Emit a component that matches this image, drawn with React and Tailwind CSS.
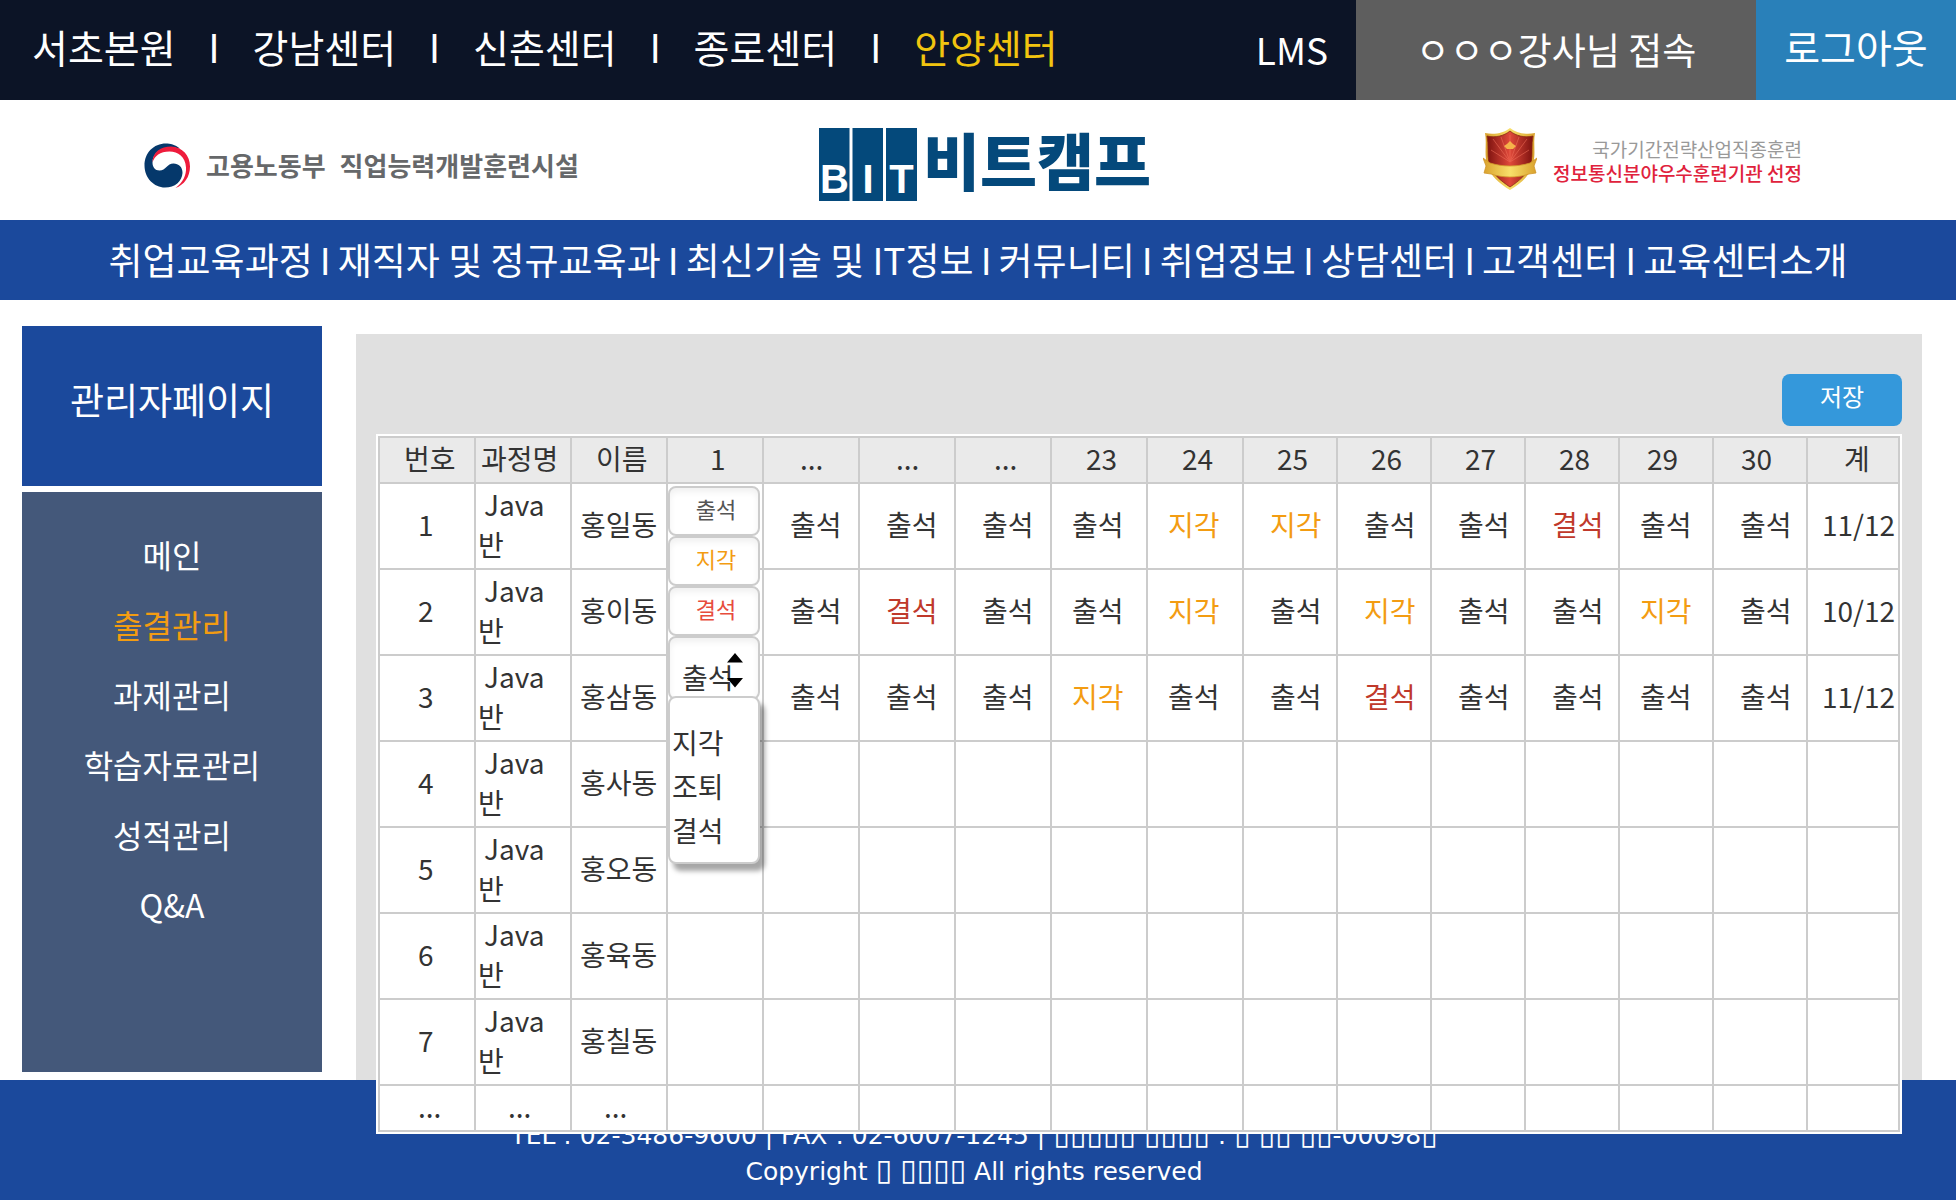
import React from "react";

const centers = ["서초본원", "강남센터", "신촌센터", "종로센터", "안양센터"];

const navItems = [
  "취업교육과정",
  "재직자 및 정규교육과",
  "최신기술 및 IT정보",
  "커뮤니티",
  "취업정보",
  "상담센터",
  "고객센터",
  "교육센터소개",
];

const menu = ["메인", "출결관리", "과제관리", "학습자료관리", "성적관리", "Q&A"];

const columns = [
  { label: "번호", head: "pl-6", cell: "pl-[38px]", width: "w-24" },
  { label: "과정명", head: "pl-[5px]", cell: "pl-[2px]", width: "w-24" },
  { label: "이름", head: "pl-6", cell: "pl-2", width: "w-24" },
  { label: "1", head: "pl-[42px]", cell: "", width: "w-24" },
  { label: "...", head: "pl-9", cell: "pl-[26px]", width: "w-24" },
  { label: "...", head: "pl-9", cell: "pl-[26px]", width: "w-24" },
  { label: "...", head: "pl-[38px]", cell: "pl-[26px]", width: "w-24" },
  { label: "23", head: "pl-[34px]", cell: "pl-5", width: "w-24" },
  { label: "24", head: "pl-[34px]", cell: "pl-5", width: "w-24" },
  { label: "25", head: "pl-[33px]", cell: "pl-[26px]", width: "w-[94px]" },
  { label: "26", head: "pl-[33px]", cell: "pl-[26px]", width: "w-[94px]" },
  { label: "27", head: "pl-[33px]", cell: "pl-[26px]", width: "w-[94px]" },
  { label: "28", head: "pl-[33px]", cell: "pl-[26px]", width: "w-[94px]" },
  { label: "29", head: "pl-[27px]", cell: "pl-5", width: "w-[94px]" },
  { label: "30", head: "pl-[27px]", cell: "pl-[26px]", width: "w-[94px]" },
  { label: "계", head: "pl-9", cell: "pl-[14px]", width: "w-[92px]" },
];

const P = "출석";
const L = "지각";
const A = "결석";

const students = [
  { name: "홍일동", days: [P, P, P, P, L, L, P, P, A, P, P], total: "11/12" },
  { name: "홍이동", days: [P, A, P, P, L, P, L, P, P, L, P], total: "10/12" },
  { name: "홍삼동", days: [P, P, P, L, P, P, A, P, P, P, P], total: "11/12" },
  { name: "홍사동", days: [], total: "" },
  { name: "홍오동", days: [], total: "" },
  { name: "홍육동", days: [], total: "" },
  { name: "홍칠동", days: [], total: "" },
];

const statusColor = {
  [P]: "text-[#333333]",
  [L]: "text-[#f39c12]",
  [A]: "text-[#c0392b]",
};

const cellBase = "border-2 border-[#cccccc] pb-1 pr-0 pt-0 text-left font-normal";

function TopBar() {
  return (
    <header className="flex h-[100px] items-stretch bg-[#0c1426] text-white">
      <nav aria-label="센터" className="flex flex-1 items-center pb-2 pl-8 text-[39px] leading-[58px]">
        {centers.map((c, i) => (
          <React.Fragment key={c}>
            {i > 0 && <span className="w-[77px] text-center">I</span>}
            <a href="#" className={i === 4 ? "text-[#f1c40f]" : ""}>
              {c}
            </a>
          </React.Fragment>
        ))}
      </nav>
      <a href="#" className="flex items-center pr-7 text-[37px]">
        LMS
      </a>
      <div className="flex w-[400px] items-center justify-center bg-[#5e5e5e] text-[37px]">ㅇㅇㅇ강사님 접속</div>
      <button type="button" className="w-[200px] bg-[#2980b9] pb-2 text-[39px] leading-[58px]">
        로그아웃
      </button>
    </header>
  );
}

function GovLogo() {
  return (
    <div className="flex items-center gap-4">
      <svg viewBox="0 0 46 46" className="size-[46px]" aria-hidden="true">
        <path
          d="M36 5.5C31 1.500 26 .5 22 .5C9.500 .5 .5 10 .5 22.500C.5 35 10 44.500 21 44.500C31 44.500 38 38.500 38.500 30C38.700 24 34.500 20.500 29.500 20.500C23 20.500 22 27.500 15.500 27.500C11 27.500 8.500 24 8.500 19.500C8.500 10 17 4.500 26 4.500C30 4.500 33 5 36 5.500Z"
          fill="#05386b"
        />
        <path
          d="M8.500 19.500C8.500 9 17 3.500 27 3.500C38.500 4 46 12.500 46 23.500C46 34 40 42 31.500 45C39 39.500 42.500 32 42 24.500C41.500 14 34 8.500 25.500 8.500C16 8.500 10.500 13 8.500 19.500Z"
          fill="#ee1c3c"
        />
      </svg>
      <p className="flex gap-[14px] pb-[2px] text-[26px] font-bold leading-9 text-[#66686a]">
        <span>고용노동부</span>
        <span>직업능력개발훈련시설</span>
      </p>
    </div>
  );
}

function BitLogo() {
  return (
    <div className="flex items-center gap-[6px] pl-6">
      <svg viewBox="0 0 98 73" className="h-[73px] w-[98px]" role="img" aria-label="BIT">
        <g fill="#04497b">
          <rect x="0" y="0" width="30.500" height="73" />
          <rect x="33.500" y="0" width="30.500" height="73" />
          <rect x="67" y="0" width="31" height="73" />
        </g>
        <g fill="#ffffff" fontFamily="Liberation Sans" fontWeight="700" fontSize="40" textAnchor="middle">
          <text x="15.500" y="65">B</text>
          <text x="49" y="65">I</text>
          <text x="82.500" y="65">T</text>
        </g>
      </svg>
      <span className="pb-[10px] text-[62px] font-black leading-[63px] text-[#04497b]">비트캠프</span>
    </div>
  );
}

function AwardLogo() {
  return (
    <div className="flex items-center gap-4">
      <svg viewBox="0 0 54 62" className="h-[62px] w-[54px]" aria-hidden="true">
        <defs>
          <linearGradient id="shieldRed" x1="0" x2="1">
            <stop offset="0" stopColor="#7d120f" />
            <stop offset=".5" stopColor="#e0493a" />
            <stop offset="1" stopColor="#7d120f" />
          </linearGradient>
          <linearGradient id="shieldGold" x1="0" x2="1">
            <stop offset="0" stopColor="#d9a02c" />
            <stop offset=".5" stopColor="#f8e06a" />
            <stop offset="1" stopColor="#d9a02c" />
          </linearGradient>
        </defs>
        <path d="M27 0C21 5 11 7 2 5C4 15 1 26 4 36C7 48 17 56 27 62C37 56 47 48 50 36C53 26 50 15 52 5C43 7 33 5 27 0Z" fill="url(#shieldGold)" />
        <path d="M27 3C21 8 12 10 4 8C6 17 4 26 6 35C9 46 18 53 27 59C36 53 45 46 48 35C50 26 48 17 50 8C42 10 33 8 27 3Z" fill="url(#shieldRed)" stroke="#8a2a10" strokeWidth=".8" />
        <path d="M27 34L10 11M27 34L18 9M27 34V7M27 34L36 9M27 34L44 11M27 34L8 22M27 34L46 22" stroke="#f0705a" strokeWidth="1" opacity=".55" />
        <path d="M21 18L24 16L27 13L30 16L33 18L30 21H24Z" fill="#f6b24a" />
        <path d="M0 30L7 35C20 39 34 39 47 35L54 30L51 38L53 45L46 46C34 50 20 50 8 46L1 45L3 38Z" fill="url(#shieldGold)" stroke="#d0962a" strokeWidth=".8" />
      </svg>
      <p className="flex flex-col items-end pt-1 text-[19px] leading-6">
        <span className="text-[#999999]">국가기간전략산업직종훈련</span>
        <span className="font-medium text-[#e0223c]">정보통신분야우수훈련기관 선정</span>
      </p>
    </div>
  );
}

function Sidebar() {
  return (
    <aside className="mt-[26px] flex w-[300px] shrink-0 flex-col gap-[6px] text-white">
      <h1 className="flex h-40 items-center justify-center bg-[#1b499c] pb-3 text-[37px]">관리자페이지</h1>
      <nav aria-label="관리자 메뉴" className="h-[580px] bg-[#44587a] pt-[27px]">
        <ul>
          {menu.map((m) => (
            <li key={m} className="text-center text-[32px] leading-[70px]">
              <a href="#" className={m === "출결관리" ? "text-[#f39c12]" : ""}>
                {m}
              </a>
            </li>
          ))}
        </ul>
      </nav>
    </aside>
  );
}

function StatusPicker() {
  const box = "block w-full rounded-lg border-2 border-[#cccccc] bg-white shadow-[inset_0_4px_6px_rgba(0,0,0,0.06)]";
  const quick = [
    { label: P, color: "text-[#555555]" },
    { label: L, color: "text-[#f39c12]" },
    { label: A, color: "text-[#e74c3c]" },
  ];
  return (
    <div className="absolute left-0 top-[2px] z-10 w-[92px]">
      {quick.map((q) => (
        <button key={q.label} type="button" className={`${box} h-[50px] pb-[6px] pl-1 text-[22px] leading-8 ${q.color}`}>
          {q.label}
        </button>
      ))}
      <div className="relative">
        <select aria-label="출결 상태" defaultValue={P} className={`${box} h-16 appearance-none pl-3 pt-[18px] leading-10`}>
          <option>출석</option>
          <option>지각</option>
          <option>조퇴</option>
          <option>결석</option>
        </select>
        <svg viewBox="0 0 16 36" className="pointer-events-none absolute right-[17px] top-[17px] h-9 w-4" aria-hidden="true">
          <path d="M8 0L16 9.500H0ZM8 34.500L16 25H0Z" fill="#000000" />
        </svg>
      </div>
      <ul
        role="listbox"
        aria-label="출결 상태 목록"
        className="relative -mt-1 rounded-lg border-2 border-[#cccccc] bg-white pb-[10px] pl-[2px] pt-[22px] leading-[44px] shadow-[5px_7px_5px_rgba(0,0,0,0.35)]"
      >
        <li role="option" aria-selected="false">지각</li>
        <li role="option" aria-selected="false">조퇴</li>
        <li role="option" aria-selected="false">결석</li>
      </ul>
    </div>
  );
}

function AttendanceTable() {
  return (
    <table className="w-full table-fixed border-collapse bg-white text-[28px] leading-10 text-[#333333]">
      <colgroup>
        {columns.map((c, i) => (
          <col key={i} className={c.width} />
        ))}
      </colgroup>
      <thead>
        <tr className="bg-[#eaeaea]">
          {columns.map((c, i) => (
            <th key={i} scope="col" className={`${cellBase} whitespace-nowrap ${c.head}`}>
              {c.label}
            </th>
          ))}
        </tr>
      </thead>
      <tbody>
        {students.map((s, r) => (
          <tr key={s.name} className="h-[86px]">
            <td className={`${cellBase} ${columns[0].cell}`}>{r + 1}</td>
            <td className={`${cellBase} ${columns[1].cell}`}>
              <span className="block pl-[6px]">Java</span>
              <span className="block">반</span>
            </td>
            <td className={`${cellBase} whitespace-nowrap ${columns[2].cell}`}>{s.name}</td>
            <td className={`${cellBase} relative`}>{r === 0 && <StatusPicker />}</td>
            {columns.slice(4, 15).map((c, i) => (
              <td key={i} className={`${cellBase} whitespace-nowrap ${c.cell} ${statusColor[s.days[i]] || ""}`}>
                {s.days[i]}
              </td>
            ))}
            <td className={`${cellBase} whitespace-nowrap ${columns[15].cell}`}>{s.total}</td>
          </tr>
        ))}
        <tr className="h-[46px]">
          {columns.map((c, i) => (
            <td key={i} className={`${cellBase} ${i === 0 ? "pl-[38px]" : "pl-8"}`}>
              {i < 3 ? "..." : ""}
            </td>
          ))}
        </tr>
      </tbody>
    </table>
  );
}

function Boxes({ children }) {
  return <span className="text-[30px] leading-none">{children}</span>;
}

export default function App() {
  return (
    <div className="min-h-screen bg-white font-['Noto_Sans_CJK_KR',sans-serif]">
      <TopBar />
      <div className="grid h-[120px] grid-cols-3 items-center pl-36 pr-[154px]">
        <div className="flex pt-3">
          <GovLogo />
        </div>
        <div className="flex justify-center pt-2">
          <BitLogo />
        </div>
        <div className="flex justify-end pb-[2px]">
          <AwardLogo />
        </div>
      </div>
      <nav
        aria-label="주 메뉴"
        className="flex h-20 items-center justify-center whitespace-nowrap bg-[#1b499c] pb-[2px] text-[37px] leading-[54px] text-white"
      >
        {navItems.map((n, i) => (
          <React.Fragment key={n}>
            {i > 0 && <span className="w-[25px] text-center">I</span>}
            <a href="#">{n}</a>
          </React.Fragment>
        ))}
      </nav>
      <main className="flex items-start gap-[34px] pl-[22px] pr-[34px]">
        <Sidebar />
        <section aria-label="출결관리" className="mt-[34px] min-w-0 flex-1 bg-[#e0e0e0] px-5 pt-10">
          <div className="flex justify-end pb-2">
            <button type="button" className="h-[52px] w-[120px] rounded-lg bg-[#3498db] pb-2 text-2xl text-white">
              저장
            </button>
          </div>
          <div className="relative z-10 bg-white p-[2px]">
            <AttendanceTable />
          </div>
        </section>
      </main>
      <footer className="relative -mt-[54px] flex h-[120px] flex-col items-center justify-end bg-[#1b499c] pb-[10px] pr-2 font-['DejaVu_Sans',sans-serif] text-[25px] leading-9 text-white">
        <p>
          TEL : 02-3486-9600 | FAX : 02-6007-1245 | <Boxes>▯▯▯▯▯</Boxes> <Boxes>▯▯▯▯</Boxes> : <Boxes>▯</Boxes>{" "}
          <Boxes>▯▯</Boxes> <Boxes>▯▯</Boxes>-00098<Boxes>▯</Boxes>
        </p>
        <p>
          Copyright <Boxes>▯</Boxes> <Boxes>▯▯▯▯</Boxes> All rights reserved
        </p>
      </footer>
    </div>
  );
}
